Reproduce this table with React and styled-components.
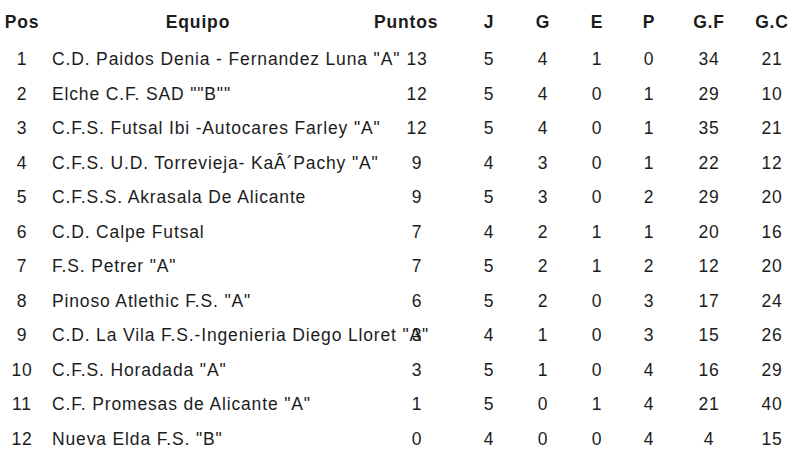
import styled, { createGlobalStyle } from "styled-components";

const GlobalStyle = createGlobalStyle`
  html, body {
    margin: 0;
    padding: 0;
    background: #ffffff;
  }
`;

// column widths in px: Pos, Equipo, Puntos, J, G, E, P, G.F, G.C
const COLUMNS = "44px 330px 86px 58px 50px 58px 46px 74px 52px";

const standings = [
  [1, 'C.D. Paidos Denia - Fernandez Luna "A"', 13, 5, 4, 1, 0, 34, 21],
  [2, 'Elche C.F. SAD ""B""', 12, 5, 4, 0, 1, 29, 10],
  [3, 'C.F.S. Futsal Ibi -Autocares Farley "A"', 12, 5, 4, 0, 1, 35, 21],
  [4, 'C.F.S. U.D. Torrevieja- KaÂ´Pachy "A"', 9, 4, 3, 0, 1, 22, 12],
  [5, "C.F.S.S. Akrasala De Alicante", 9, 5, 3, 0, 2, 29, 20],
  [6, "C.D. Calpe Futsal", 7, 4, 2, 1, 1, 20, 16],
  [7, 'F.S. Petrer "A"', 7, 5, 2, 1, 2, 12, 20],
  [8, 'Pinoso Atlethic F.S. "A"', 6, 5, 2, 0, 3, 17, 24],
  [9, 'C.D. La Vila F.S.-Ingenieria Diego Lloret "A"', 3, 4, 1, 0, 3, 15, 26],
  [10, 'C.F.S. Horadada "A"', 3, 5, 1, 0, 4, 16, 29],
  [11, 'C.F. Promesas de Alicante "A"', 1, 5, 0, 1, 4, 21, 40],
  [12, 'Nueva Elda F.S. "B"', 0, 4, 0, 0, 4, 4, 15],
];

function App() {
  return (
    <>
      <GlobalStyle />
      <Table>
        <HeaderRow>
          <HeadCell>Pos</HeadCell>
          <HeadCell $shift="0 22px 0 0">Equipo</HeadCell>
          <HeadCell $align="left">Puntos</HeadCell>
          <HeadCell>J</HeadCell>
          <HeadCell>G</HeadCell>
          <HeadCell>E</HeadCell>
          <HeadCell>P</HeadCell>
          <HeadCell>G.F</HeadCell>
          <HeadCell>G.C</HeadCell>
        </HeaderRow>
        {standings.map(([pos, team, ...stats]) => (
          <Row key={pos}>
            <Cell>{pos}</Cell>
            <TeamCell>{team}</TeamCell>
            {stats.map((value, i) => (
              <Cell key={i}>{value}</Cell>
            ))}
          </Row>
        ))}
      </Table>
    </>
  );
}

export default App;

const Table = styled.div`
  width: 800px;
  padding-top: 5px;
  font-family: "Liberation Sans", Arial, sans-serif;
  font-size: 17.5px;
  letter-spacing: 0.85px;
  color: #1c1c1c;
`;

const HeaderRow = styled.div`
  display: grid;
  grid-template-columns: ${COLUMNS};
  line-height: 34.5px;
  padding-bottom: 2.5px;
  font-weight: bold;
`;

const HeadCell = styled.div`
  text-align: ${(p) => p.$align || "center"};
  padding: ${(p) => p.$shift || "0"};
  white-space: nowrap;
`;

const Row = styled.div`
  display: grid;
  grid-template-columns: ${COLUMNS};
  line-height: 34.5px;
`;

const Cell = styled.div`
  text-align: center;
  white-space: nowrap;
`;

const TeamCell = styled.div`
  padding-left: 8px;
  white-space: nowrap;
  overflow: visible;
`;
